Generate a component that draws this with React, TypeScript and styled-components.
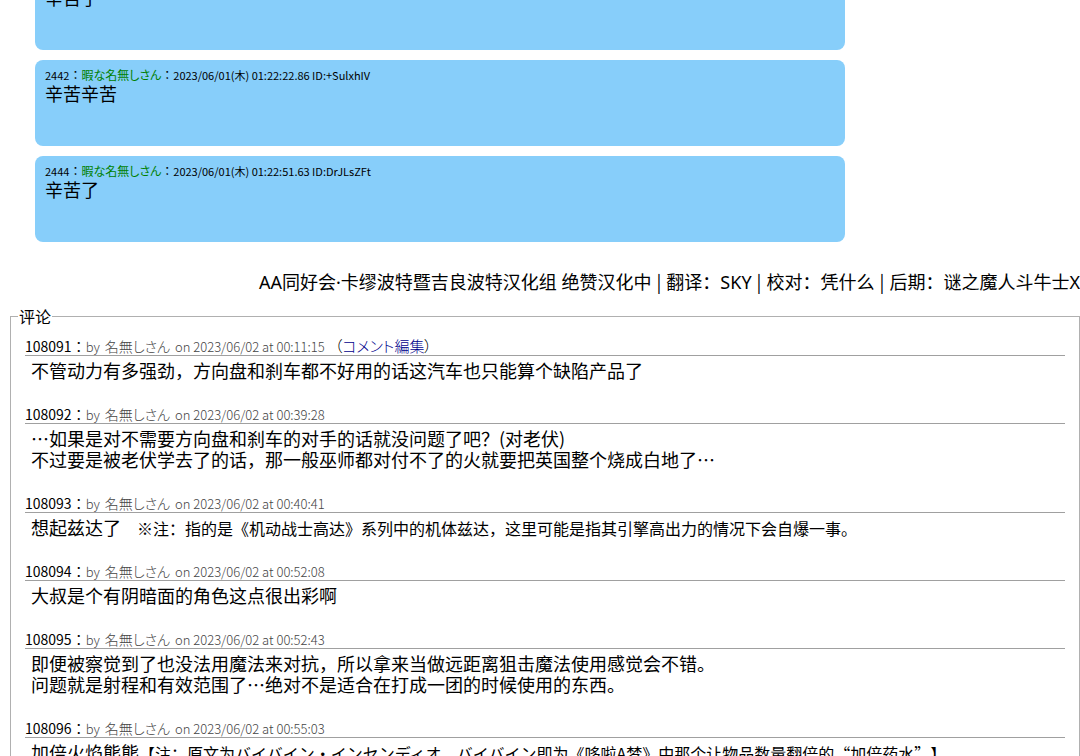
import React from 'react';
import styled, { createGlobalStyle } from 'styled-components';

const GlobalStyle = createGlobalStyle`
  html { overflow: hidden; }
  body {
    margin: 0;
    background: #fff;
    color: #000;
    font-family: "Noto Sans CJK SC", "Noto Sans CJK JP", sans-serif;
    font-size: 18px;
    line-height: 21px;
  }
`;

const Page = styled.main`
  height: 100vh;
  overflow: hidden;
`;

const PostList = styled.section`
  display: flex;
  flex-direction: column;
  gap: 10px;
  max-width: 810px;
  margin: 0 35px;
`;

const Post = styled.article<{ $continued?: boolean }>`
  box-sizing: border-box;
  height: ${(p) => (p.$continued ? 63 : 86)}px;
  margin-top: ${(p) => (p.$continued ? -13 : 0)}px;
  padding: ${(p) => (p.$continued ? 0 : 7)}px 10px 0;
  border-radius: ${(p) => (p.$continued ? '0 0 8px 8px' : '8px')};
  background: #87cefa;
`;

const PostMeta = styled.header`
  display: flex;
  align-items: baseline;
  font-family: "Noto Sans CJK JP", sans-serif;
  font-size: 12px;
  line-height: 16px;
  white-space: pre;
`;

const PostStamp = styled.span`
  font-size: 11px;
`;

const PosterName = styled.span`
  color: #008000;
  font-feature-settings: "palt";
`;

const PostBody = styled.p`
  margin: 0;
`;

const Credits = styled.p`
  margin: 30px 0 13px;
  font-family: "Noto Sans", "Noto Sans CJK SC", sans-serif;
  text-align: right;
  white-space: nowrap;
`;

const Separator = styled.span`
  margin: 0 1px;
  font-family: "Noto Sans CJK SC", sans-serif;
  line-height: 18px;
  white-space: pre;
`;

const Comments = styled.fieldset`
  min-width: 0;
  margin: 0 0 0 10px;
  padding: 11px 14px 0;
  border: 1px solid #b0b0b0;
`;

const CommentsTitle = styled.legend`
  margin-left: -7px;
  padding: 0 1px;
  font-size: 16px;
  line-height: 20px;
`;

const Comment = styled.article`
  margin-bottom: 24px;
`;

const CommentHead = styled.header`
  display: flex;
  align-items: baseline;
  height: 18px;
  font-family: "Noto Sans CJK JP", sans-serif;
  font-size: 14px;
  line-height: 18px;
  border-bottom: 1px solid #a0a0a0;
  white-space: pre;
`;

const Byline = styled.span`
  color: #444;
  font-size: 13px;
  font-weight: 300;
`;

const Author = styled.span`
  margin: 0 2px;
  font-size: 14px;
  font-feature-settings: "palt";
`;

const EditAction = styled.span`
  margin-left: 10px;
  font-size: 15px;
  font-weight: 300;
  font-feature-settings: "palt";
`;

const EditLink = styled.a`
  color: #00008b;
  text-decoration: none;
`;

const CommentBody = styled.p`
  margin: 4px 0 0 6px;
  white-space: pre-line;
`;

const Note = styled.span`
  font-size: 16px;
  line-height: 16px;
  text-spacing-trim: space-all;
`;

const posts = [
  { id: '2442', time: '2023/06/01(木) 01:22:22.86 ID:+SulxhIV', text: '辛苦辛苦' },
  { id: '2444', time: '2023/06/01(木) 01:22:51.63 ID:DrJLsZFt', text: '辛苦了' },
];

const credits = ['AA同好会·卡缪波特暨吉良波特汉化组 绝赞汉化中', '翻译：SKY', '校对：凭什么', '后期：谜之魔人斗牛士X'];

interface CommentData {
  id: string;
  time: string;
  text: string;
  note?: string;
  editable?: boolean;
}

const comments: CommentData[] = [
  { id: '108091', time: '00:11:15', text: '不管动力有多强劲，方向盘和刹车都不好用的话这汽车也只能算个缺陷产品了', editable: true },
  { id: '108092', time: '00:39:28', text: '⋯如果是对不需要方向盘和刹车的对手的话就没问题了吧？(对老伏)\n不过要是被老伏学去了的话，那一般巫师都对付不了的火就要把英国整个烧成白地了⋯' },
  { id: '108093', time: '00:40:41', text: '想起兹达了', note: '　※注：指的是《机动战士高达》系列中的机体兹达，这里可能是指其引擎高出力的情况下会自爆一事。' },
  { id: '108094', time: '00:52:08', text: '大叔是个有阴暗面的角色这点很出彩啊' },
  { id: '108095', time: '00:52:43', text: '即便被察觉到了也没法用魔法来对抗，所以拿来当做远距离狙击魔法使用感觉会不错。\n问题就是射程和有效范围了⋯绝对不是适合在打成一团的时候使用的东西。' },
  { id: '108096', time: '00:55:03', text: '加倍火焰熊熊', note: '【注：原文为バイバイン・インセンディオ，バイバイン即为《哆啦A梦》中那个让物品数量翻倍的“加倍药水”】' },
];

export default function App() {
  return (
    <>
      <GlobalStyle />
      <Page lang="zh-CN">
        <PostList>
          <Post $continued>
            <PostBody>辛苦了</PostBody>
          </Post>
          {posts.map((post) => (
            <Post key={post.id}>
              <PostMeta lang="ja">
                <PostStamp>{post.id}</PostStamp>：<PosterName>暇な名無しさん</PosterName>：
                <PostStamp>{post.time}</PostStamp>
              </PostMeta>
              <PostBody>{post.text}</PostBody>
            </Post>
          ))}
        </PostList>
        <Credits>
          {credits.map((credit, index) => (
            <React.Fragment key={credit}>
              {index > 0 && <Separator>{' | '}</Separator>}
              {credit}
            </React.Fragment>
          ))}
        </Credits>
        <Comments>
          <CommentsTitle>评论</CommentsTitle>
          {comments.map((comment) => (
            <Comment key={comment.id}>
              <CommentHead lang="ja">
                {comment.id}：
                <Byline>
                  by <Author>名無しさん</Author> on 2023/06/02 at {comment.time}
                </Byline>
                {comment.editable && (
                  <EditAction>
                    （<EditLink href="#edit">コメント編集</EditLink>）
                  </EditAction>
                )}
              </CommentHead>
              <CommentBody>
                {comment.text}
                {comment.note && <Note>{comment.note}</Note>}
              </CommentBody>
            </Comment>
          ))}
        </Comments>
      </Page>
    </>
  );
}
